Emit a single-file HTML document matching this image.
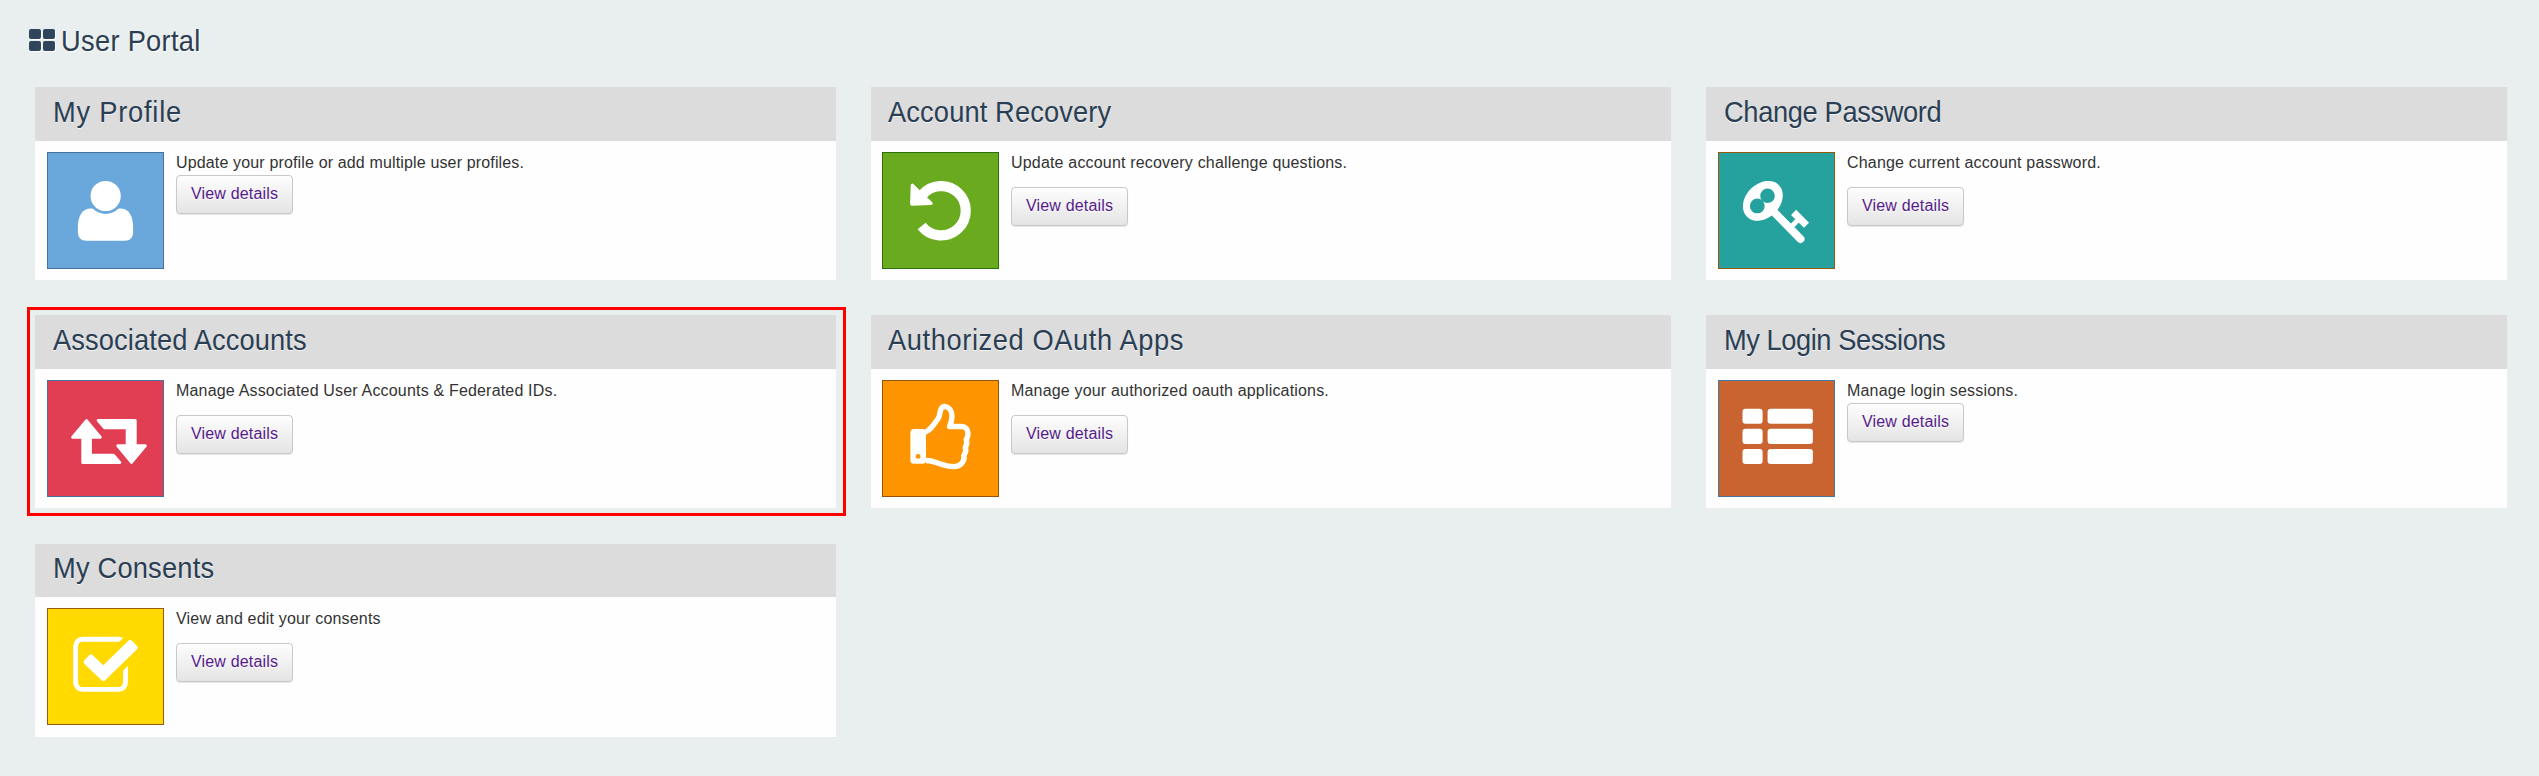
<!DOCTYPE html>
<html><head><meta charset="utf-8">
<style>
html,body{margin:0;padding:0;}
body{width:2539px;height:776px;background:#e9eeef;position:relative;overflow:hidden;font-family:"Liberation Sans",sans-serif;}
.title{position:absolute;left:0;top:0;}
.title svg{position:absolute;left:29px;top:29px;}
.title span{position:absolute;left:61px;top:24px;font-size:29px;line-height:34px;color:#2c3e50;white-space:nowrap;letter-spacing:0.32px;text-shadow:1px 1px 0 #fff;transform:scaleX(0.94);transform-origin:0 0;}
.panel{position:absolute;height:193px;}
.hd{position:absolute;left:0;top:0;right:0;height:54px;background:#dcdcdc;}
.hd h2{position:absolute;left:18px;top:8px;margin:0;font-weight:normal;font-size:29px;line-height:34px;color:#2a3e54;white-space:nowrap;transform:scaleX(0.94);transform-origin:0 0;text-shadow:0 1px 0 #f4f4f4;}
.bd{position:absolute;left:0;top:54px;right:0;height:139px;background:#fefefe;}
.ic{position:absolute;left:12px;top:65px;width:117px;height:117px;box-sizing:border-box;border:1px solid;}
.ic svg{position:absolute;left:-1px;top:-1px;}
.desc{position:absolute;left:141px;top:68px;font-size:16px;line-height:16px;color:#333;white-space:nowrap;letter-spacing:0.18px;}
.btn{position:absolute;left:141px;top:88px;width:117px;height:39px;box-sizing:border-box;border:1px solid #c8c8c8;border-radius:4px;background:linear-gradient(#fdfdfd,#e4e4e4);box-shadow:0 1px 1px rgba(0,0,0,.1);font-size:16px;line-height:35px;color:#551a8b;text-shadow:0 1px 0 #fff;white-space:nowrap;letter-spacing:0.17px;}
.btn span{position:absolute;left:14px;top:0;}
.low .btn{top:100px;}
.p2 .ic{left:11px;} .p2 .desc,.p2 .btn{left:140px;} .p2 .hd h2{left:17px;}
.r3 .hd{top:1px;height:53px;} .r3 .hd h2{top:7px;} .r3 .bd{height:140px;}
.hl{position:absolute;left:27px;top:307px;width:819px;height:209px;box-sizing:border-box;border:3px solid #ff0000;}
</style></head>
<body>
<div class="title"><svg width="27" height="23" viewBox="0 0 27 23"><g fill="#fff" transform="translate(1,1)"><rect x="0" y="0" width="12" height="10" rx="2"/><rect x="14" y="0" width="12" height="10" rx="2"/><rect x="0" y="12" width="12" height="10" rx="2"/><rect x="14" y="12" width="12" height="10" rx="2"/></g><g fill="#2f455c"><rect x="0" y="0" width="12" height="10" rx="2"/><rect x="14" y="0" width="12" height="10" rx="2"/><rect x="0" y="12" width="12" height="10" rx="2"/><rect x="14" y="12" width="12" height="10" rx="2"/></g></svg><span>User Portal</span></div>
<div class="panel " style="left:35px;top:87px;width:801px;">
 <div class="hd"><h2 style="letter-spacing:0.83px">My Profile</h2></div>
 <div class="bd"></div>
 <div class="ic" style="background:#6aa8dc;border-color:#44719f;"><svg width="117" height="117" viewBox="0 0 117 117"><path fill="#fff" d="M30.9,80.3 L30.9,75 C30.9,63.5 35.5,56.4 44,56.4 L73.5,56.4 C81.5,56.4 86.1,63.5 86.1,75 L86.1,80.3 C86.1,85.5 83,88.8 77.6,88.8 L39.4,88.8 C34,88.8 30.9,85.5 30.9,80.3 Z"/><circle cx="58.65" cy="44" r="17.9" fill="#6aa8dc"/><circle cx="58.65" cy="44" r="15.1" fill="#fff"/></svg></div>
 <div class="desc" style="letter-spacing:0.15px">Update your profile or add multiple user profiles.</div>
 <div class="btn"><span>View details</span></div>
</div>
<div class="panel low p2" style="left:871px;top:87px;width:800px;">
 <div class="hd"><h2 style="letter-spacing:0.14px">Account Recovery</h2></div>
 <div class="bd"></div>
 <div class="ic" style="background:#6aaa1e;border-color:#2a700c;"><svg width="117" height="117" viewBox="0 0 117 117"><path d="M40.1,42.9 A24.7,24.7 0 1 1 39.64,74.01" fill="none" stroke="#fff" stroke-width="10.2"/><path d="M30.4,33.4 L29.8,52 L49,51.4 Z" fill="#fff" stroke="#fff" stroke-width="3.4" stroke-linejoin="round"/></svg></div>
 <div class="desc">Update account recovery challenge questions.</div>
 <div class="btn"><span>View details</span></div>
</div>
<div class="panel low" style="left:1706px;top:87px;width:801px;">
 <div class="hd"><h2 style="letter-spacing:-0.38px">Change Password</h2></div>
 <div class="bd"></div>
 <div class="ic" style="background:#26a29e;border-color:#955a0c;"><svg width="117" height="117" viewBox="0 0 117 117"><ellipse cx="44.85" cy="48.85" rx="22.5" ry="17" transform="rotate(-45 44.85 48.85)" fill="#fff"/><circle cx="49.5" cy="43.8" r="7.3" fill="#26a29e"/><circle cx="39.3" cy="53.9" r="7.4" fill="#26a29e"/><line x1="52" y1="56" x2="82.5" y2="87" stroke="#fff" stroke-width="8" stroke-linecap="round"/><line x1="75.6" y1="60.4" x2="88.5" y2="73.2" stroke="#fff" stroke-width="7.2"/><line x1="72" y1="76" x2="82" y2="66" stroke="#fff" stroke-width="5"/></svg></div>
 <div class="desc">Change current account password.</div>
 <div class="btn"><span>View details</span></div>
</div>
<div class="panel low" style="left:35px;top:315px;width:801px;">
 <div class="hd"><h2 style="letter-spacing:0.12px">Associated Accounts</h2></div>
 <div class="bd"></div>
 <div class="ic" style="background:#e23e53;border-color:#44719f;"><svg width="117" height="117" viewBox="0 0 117 117"><g fill="#fff" stroke="#fff" stroke-width="3" stroke-linejoin="round"><path d="M39.5,40.7 L53.2,57.3 L43.4,57.3 L43.4,75.2 L66.4,75.2 L72.8,82.5 L35.8,82.5 L35.8,57.3 L25.7,57.3 Z"/><path d="M84.5,82.3 L70.8,65.7 L80.2,65.7 L80.2,47.8 L57.6,47.8 L51.2,40.5 L88.2,40.5 L88.2,65.7 L98.3,65.7 Z"/></g></svg></div>
 <div class="desc">Manage Associated User Accounts &amp; Federated IDs.</div>
 <div class="btn"><span>View details</span></div>
</div>
<div class="panel low p2" style="left:871px;top:315px;width:800px;">
 <div class="hd"><h2 style="letter-spacing:0.64px">Authorized OAuth Apps</h2></div>
 <div class="bd"></div>
 <div class="ic" style="background:#fe9400;border-color:#965208;"><svg width="117" height="117" viewBox="0 0 117 117"><rect x="28.4" y="48.9" width="15.6" height="34.9" rx="3.5" fill="#fff"/><circle cx="36.1" cy="76.4" r="2.4" fill="#fe9400"/><path d="M43.5,51.8 C47.5,51 50.5,46.5 56.2,38.5 C58.5,35 57.6,31.5 59,29 C60,27 61.5,26.4 63.2,26.6 C67.5,27.2 70,31 70,36.5 C70,40 69,43 67.6,46.5 L79.5,46.5 C83.5,46.5 85.9,49.5 85.9,53 Q86.2,57 84.2,59.5 Q85.8,63.5 83.3,67.5 Q84.8,71.5 81.8,75.5 Q83,80 79.5,83.5 Q77,86.6 72,86.6 C66,86.6 60,84.8 55,82.8 C50.5,81.1 47,80.5 43.7,80.5" fill="none" stroke="#fff" stroke-width="5.4" stroke-linejoin="round"/></svg></div>
 <div class="desc">Manage your authorized oauth applications.</div>
 <div class="btn"><span>View details</span></div>
</div>
<div class="panel " style="left:1706px;top:315px;width:801px;">
 <div class="hd"><h2 style="letter-spacing:-0.47px">My Login Sessions</h2></div>
 <div class="bd"></div>
 <div class="ic" style="background:#c96430;border-color:#4676a6;"><svg width="117" height="117" viewBox="0 0 117 117"><g fill="#fff"><rect x="24.5" y="28.7" width="20.1" height="15.1" rx="3"/><rect x="49.6" y="28.7" width="45.3" height="15.1" rx="3"/><rect x="24.5" y="48.8" width="20.1" height="15.1" rx="3"/><rect x="49.6" y="48.8" width="45.3" height="15.1" rx="3"/><rect x="24.5" y="68.9" width="20.1" height="15.1" rx="3"/><rect x="49.6" y="68.9" width="45.3" height="15.1" rx="3"/></g></svg></div>
 <div class="desc">Manage login sessions.</div>
 <div class="btn"><span>View details</span></div>
</div>
<div class="panel low r3" style="left:35px;top:543px;width:801px;">
 <div class="hd"><h2 style="letter-spacing:0.21px">My Consents</h2></div>
 <div class="bd"></div>
 <div class="ic" style="background:#ffd900;border-color:#9a5a10;"><svg width="117" height="117" viewBox="0 0 117 117"><rect x="28.65" y="31.25" width="49.85" height="50.15" rx="6.8" fill="none" stroke="#fff" stroke-width="4.9"/><polygon points="65,41 100,6 100,38.8 65,73.8" fill="#ffd900"/><polygon points="43.97,48.63 56.27,60.33 83.22,34.17 88.51,39.62 56.33,70.87 38.73,54.13" fill="#fff" stroke="#fff" stroke-width="4.4" stroke-linejoin="round"/></svg></div>
 <div class="desc">View and edit your consents</div>
 <div class="btn"><span>View details</span></div>
</div>
<div class="hl"></div>
</body></html>
